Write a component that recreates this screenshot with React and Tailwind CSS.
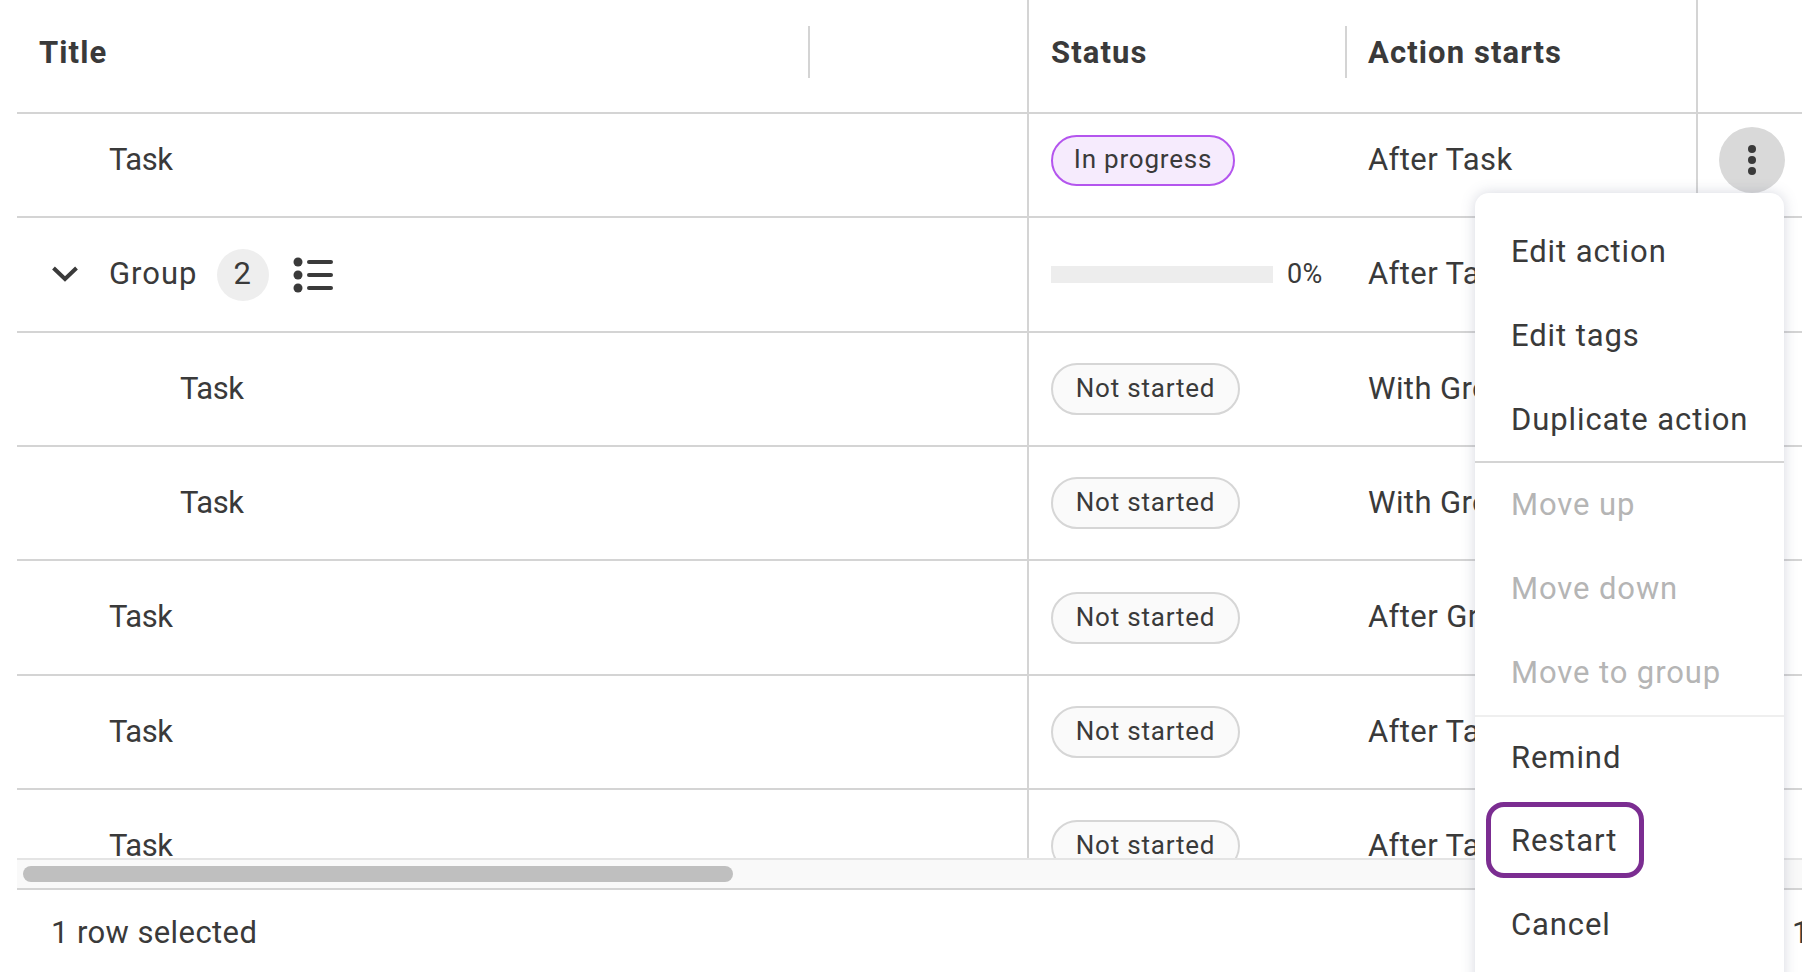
const font = "font-['Roboto','Liberation_Sans',sans-serif]";

function Pill({ active }) {
  return active ? (
    <span className="flex h-[51px] w-[184px] items-center justify-center rounded-full border-2 border-[#b455ee] bg-[#f6ebfd] pb-[1px] text-[26px] tracking-[0.8px]">In progress</span>
  ) : (
    <span className="flex h-[52px] w-[189px] items-center justify-center rounded-full border-2 border-[#d6d6d6] bg-[#fafafa] pb-[1px] text-[26px] tracking-[0.8px]">Not started</span>
  );
}

function Row({ title, indent, start, status, height, tail, pb }) {
  return (
    <div className={`flex shrink-0 border-b-2 border-[#d4d4d4] ${height}`}>
      <div className={`flex w-[1010px] shrink-0 items-center ${indent} ${pb}`}>
        <span className={title === "Task" ? "tracking-[-0.5px]" : "tracking-[1px]"}>{title}</span>
        {tail}
      </div>
      <div className={`flex w-[669px] shrink-0 items-center border-l-2 border-[#d4d4d4] pl-[22px] ${pb}`}>
        <div className="w-[317px] shrink-0">{status}</div>
        <span>{start}</span>
      </div>
      <div className={`flex grow items-center border-l-2 border-[#d4d4d4] ${pb}`}></div>
    </div>
  );
}

const Chevron = () => (
  <svg width="26" height="16" viewBox="0 0 26 16" className="absolute left-[52px] top-[266px]" fill="none" stroke="#3a3a3a" strokeWidth="4">
    <path d="M1.5 2 13 13 24.5 2" />
  </svg>
);

const ListIcon = () => (
  <svg width="40" height="36" viewBox="0 0 40 36" className="ml-[24px]" fill="#3a3a3a">
    <circle cx="5" cy="5" r="4.5" />
    <circle cx="5" cy="18" r="4.5" />
    <circle cx="5" cy="31" r="4.5" />
    <rect x="14" y="3" width="26" height="4" rx="2" />
    <rect x="14" y="16" width="26" height="4" rx="2" />
    <rect x="14" y="29" width="26" height="4" rx="2" />
  </svg>
);

const Progress = () => (
  <div className="flex items-center">
    <div className="h-[17px] w-[222px] bg-[#ededed]"></div>
    <span className="ml-[14px] text-[27px]">0%</span>
  </div>
);

function Item({ children, disabled }) {
  return (
    <div className={`flex h-[84px] shrink-0 items-center pl-[36px] tracking-[0.9px] ${disabled ? "text-[#b5b5b5]" : ""}`}>{children}</div>
  );
}

export default function App() {
  return (
    <div className={`relative h-[972px] w-[1802px] overflow-hidden bg-white text-[31px] tracking-[0.4px] text-[#3a3a3a] ${font}`}>
      <div className="ml-[17px] flex h-[890px] flex-col border-b-2 border-[#d4d4d4]">
        <div className="flex h-[114px] shrink-0 border-b-2 border-[#d4d4d4] font-bold tracking-[1.1px]">
          <div className="flex w-[1010px] shrink-0 items-center pb-[8px] pl-[22px]">
            <span className="w-[769px] pt-[3px]">Title</span>
            <span className="h-[52px] w-[2px] bg-[#d4d4d4]"></span>
          </div>
          <div className="flex w-[669px] shrink-0 items-center border-l-2 border-[#d4d4d4] pb-[8px] pl-[22px]">
            <span className="w-[294px] pt-[3px]">Status</span>
            <span className="mr-[21px] h-[52px] w-[2px] bg-[#d4d4d4]"></span>
            <span className="pt-[3px]">Action starts</span>
          </div>
          <div className="grow border-l-2 border-[#d4d4d4]"></div>
        </div>
        <div className="flex h-[746px] flex-col overflow-hidden">
          <Row height="h-[104px]" pb="pb-[10px]" indent="pl-[92px]" title="Task" start="After Task" status={<Pill active />} />
          <Row height="h-[115px]" indent="pl-[92px]" title="Group" start="After Task" status={<Progress />}
            tail={<>
              <span className="ml-[19px] flex h-[52px] w-[52px] items-center justify-center rounded-full bg-[#eeeeee]">2</span>
              <ListIcon />
            </>} />
          <Row height="h-[114px]" indent="pl-[163px]" title="Task" start="With Group" status={<Pill />} />
          <Row height="h-[114px]" indent="pl-[163px]" title="Task" start="With Group" status={<Pill />} />
          <Row height="h-[115px]" indent="pl-[92px]" title="Task" start="After Group" status={<Pill />} />
          <Row height="h-[114px]" indent="pl-[92px]" title="Task" start="After Task" status={<Pill />} />
          <Row height="h-[114px]" indent="pl-[92px]" title="Task" start="After Task" status={<Pill />} />
        </div>
        <div className="h-[30px] shrink-0 border-t-2 border-[#e4e4e4] bg-[#f9f9f9] pl-[6px] pt-[6px]">
          <div className="h-[16px] w-[710px] rounded-full bg-[#bfbfbf]"></div>
        </div>
      </div>
      <div className="flex h-[82px] items-center justify-between pl-[51px] pt-[4px]">
        <span>1 row selected</span>
        <span className="w-[10px] overflow-hidden">1</span>
      </div>

      <Chevron />

      <div className="absolute left-[1719px] top-[127px] flex h-[66px] w-[66px] flex-col items-center justify-center gap-[3px] rounded-full bg-[#d9d9d9]">
        <span className="h-[8px] w-[8px] rounded-full bg-[#3a3a3a]"></span>
        <span className="h-[8px] w-[8px] rounded-full bg-[#3a3a3a]"></span>
        <span className="h-[8px] w-[8px] rounded-full bg-[#3a3a3a]"></span>
      </div>

      <div className="absolute left-[1475px] top-[193px] flex h-[800px] w-[309px] flex-col rounded-t-[14px] bg-white pt-[17px] shadow-[0_0_14px_rgba(90,100,130,0.25)]">
        <Item>Edit action</Item>
        <Item>Edit tags</Item>
        <Item>Duplicate action</Item>
        <div className="-mt-[1px] h-[2px] shrink-0 bg-[#d4d4d4]"></div>
        <Item disabled>Move up</Item>
        <Item disabled>Move down</Item>
        <Item disabled>Move to group</Item>
        <div className="-mb-[1px] h-[2px] shrink-0 bg-[#efefef]"></div>
        <Item>Remind</Item>
        <div className="-mt-[1px]"></div>
        <Item>Restart</Item>
        <Item>Cancel</Item>
        <div className="absolute left-[11px] top-[609px] h-[76px] w-[158px] rounded-[18px] border-[5px] border-[#7b2d91]"></div>
      </div>
    </div>
  );
}
